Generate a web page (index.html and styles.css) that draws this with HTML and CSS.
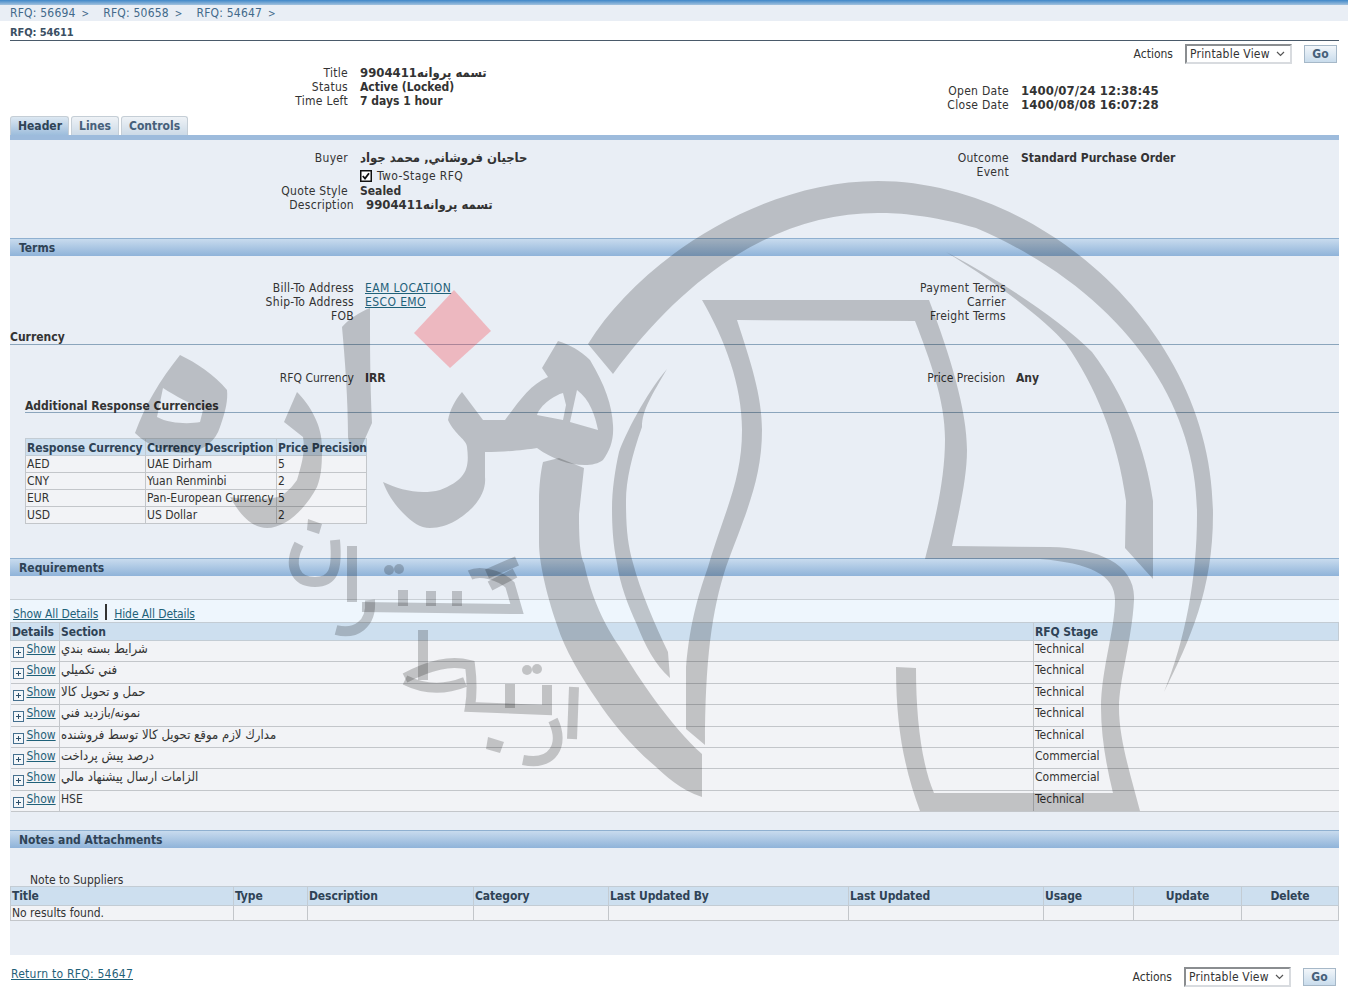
FILE: index.html
```html
<!DOCTYPE html>
<html lang="en">
<head>
    <meta charset="UTF-8">
    <title>RFQ: 54611</title>
    <link rel="stylesheet" href="styles.css">
</head>
<body>
    <div class="topbar"></div>
    <div class="crumbs">
        <a href="#">RFQ: 56694</a><span class="sep">&gt;</span>
        <a href="#">RFQ: 50658</a><span class="sep">&gt;</span>
        <a href="#">RFQ: 54647</a><span class="sep">&gt;</span>
    </div>

    <div class="page">
        <div class="page-title">RFQ: 54611</div>

        <div class="actions">
            <label>Actions</label>
            <select><option>Printable View</option></select>
            <button>Go</button>
        </div>

        <!-- Summary -->
        <div class="cols summary">
            <div class="kv">
                <span class="k">Title</span><span class="v v-big">تسمه پروانه9904411</span>
                <span class="k">Status</span><span class="v">Active (Locked)</span>
                <span class="k">Time Left</span><span class="v">7 days 1 hour</span>
            </div>
            <div class="kv kv-right summary-dates">
                <span class="k">Open Date</span><span class="v v-big v-date">1400/07/24 12:38:45</span>
                <span class="k">Close Date</span><span class="v v-big v-date">1400/08/08 16:07:28</span>
            </div>
        </div>

        <div class="tabs">
            <div class="tab active">Header</div>
            <div class="tab">Lines</div>
            <div class="tab">Controls</div>
        </div>

        <div class="panel">
            <!-- Header -->
            <div class="cols header-info">
                <div class="kv">
                    <span class="k">Buyer</span><span class="v v-big">حاجيان فروشاني, محمد جواد</span>
                    <span class="k"></span>
                    <span class="check-row">
                        <svg class="check" width="12" height="12" viewBox="0 0 12 12"><rect x="0.75" y="0.75" width="10.5" height="10.5" fill="#fff" stroke="#111" stroke-width="1.5"/><path d="M2.8 6l2.2 2.6 4-5.4" fill="none" stroke="#111" stroke-width="1.8"/></svg>
                        <span>Two-Stage RFQ</span>
                    </span>
                    <span class="k">Quote Style</span><span class="v">Sealed</span>
                    <span class="k k-desc">Description</span><span class="v v-big v-desc">تسمه پروانه9904411</span>
                </div>
                <div class="kv kv-right">
                    <span class="k">Outcome</span><span class="v">Standard Purchase Order</span>
                    <span class="k">Event</span><span class="v"></span>
                </div>
            </div>

            <!-- Terms -->
            <h2 class="bar bar-terms">Terms</h2>
            <div class="cols terms-info">
                <div class="kv kv-terms">
                    <span class="k">Bill-To Address</span><a class="v-link" href="#">EAM LOCATION</a>
                    <span class="k">Ship-To Address</span><a class="v-link" href="#">ESCO EMO</a>
                    <span class="k">FOB</span><span></span>
                </div>
                <div class="kv kv-terms-right">
                    <span class="k">Payment Terms</span><span></span>
                    <span class="k">Carrier</span><span></span>
                    <span class="k">Freight Terms</span><span></span>
                </div>
            </div>

            <h3 class="subhead subhead-currency">Currency</h3>
            <div class="cols currency-info">
                <div class="kv kv-terms">
                    <span class="k">RFQ Currency</span><span class="v">IRR</span>
                </div>
                <div class="kv kv-terms-right kv-precision">
                    <span class="k">Price Precision</span><span class="v">Any</span>
                </div>
            </div>

            <h3 class="subhead subhead-extra">Additional Response Currencies</h3>
            <table class="grid grid-currency">
                <tr><th>Response Currency</th><th>Currency Description</th><th>Price Precision</th></tr>
                <tr><td>AED</td><td>UAE Dirham</td><td>5</td></tr>
                <tr><td>CNY</td><td>Yuan Renminbi</td><td>2</td></tr>
                <tr><td>EUR</td><td>Pan-European Currency</td><td>5</td></tr>
                <tr><td>USD</td><td>US Dollar</td><td>2</td></tr>
            </table>

            <!-- Requirements -->
            <h2 class="bar bar-req">Requirements</h2>
            <div class="detail-links">
                <a href="#">Show All Details</a><span class="pipe"></span><a href="#">Hide All Details</a>
            </div>
            <table class="grid grid-req">
                <tr><th class="c-details">Details</th><th class="c-section">Section</th><th>RFQ Stage</th></tr>
                <tr><td class="c-details"><svg class="plus" viewBox="0 0 11 11"><rect x="0.5" y="0.5" width="10" height="10" fill="#f3f6f9" stroke="#45708f"/><path d="M3 5.5h5M5.5 3v5" stroke="#2c4f6b"/></svg><a href="#">Show</a></td><td class="fa">شرايط بسته بندي</td><td>Technical</td></tr>
                <tr><td class="c-details"><svg class="plus" viewBox="0 0 11 11"><rect x="0.5" y="0.5" width="10" height="10" fill="#f3f6f9" stroke="#45708f"/><path d="M3 5.5h5M5.5 3v5" stroke="#2c4f6b"/></svg><a href="#">Show</a></td><td class="fa">فني تكميلي</td><td>Technical</td></tr>
                <tr><td class="c-details"><svg class="plus" viewBox="0 0 11 11"><rect x="0.5" y="0.5" width="10" height="10" fill="#f3f6f9" stroke="#45708f"/><path d="M3 5.5h5M5.5 3v5" stroke="#2c4f6b"/></svg><a href="#">Show</a></td><td class="fa">حمل و تحويل كالا</td><td>Technical</td></tr>
                <tr><td class="c-details"><svg class="plus" viewBox="0 0 11 11"><rect x="0.5" y="0.5" width="10" height="10" fill="#f3f6f9" stroke="#45708f"/><path d="M3 5.5h5M5.5 3v5" stroke="#2c4f6b"/></svg><a href="#">Show</a></td><td class="fa">نمونه/بازديد فني</td><td>Technical</td></tr>
                <tr><td class="c-details"><svg class="plus" viewBox="0 0 11 11"><rect x="0.5" y="0.5" width="10" height="10" fill="#f3f6f9" stroke="#45708f"/><path d="M3 5.5h5M5.5 3v5" stroke="#2c4f6b"/></svg><a href="#">Show</a></td><td class="fa">مدارك لازم موقع تحويل كالا توسط فروشنده</td><td>Technical</td></tr>
                <tr><td class="c-details"><svg class="plus" viewBox="0 0 11 11"><rect x="0.5" y="0.5" width="10" height="10" fill="#f3f6f9" stroke="#45708f"/><path d="M3 5.5h5M5.5 3v5" stroke="#2c4f6b"/></svg><a href="#">Show</a></td><td class="fa">درصد پيش پرداخت</td><td>Commercial</td></tr>
                <tr><td class="c-details"><svg class="plus" viewBox="0 0 11 11"><rect x="0.5" y="0.5" width="10" height="10" fill="#f3f6f9" stroke="#45708f"/><path d="M3 5.5h5M5.5 3v5" stroke="#2c4f6b"/></svg><a href="#">Show</a></td><td class="fa">الزامات ارسال پيشنهاد مالي</td><td>Commercial</td></tr>
                <tr><td class="c-details"><svg class="plus" viewBox="0 0 11 11"><rect x="0.5" y="0.5" width="10" height="10" fill="#f3f6f9" stroke="#45708f"/><path d="M3 5.5h5M5.5 3v5" stroke="#2c4f6b"/></svg><a href="#">Show</a></td><td>HSE</td><td>Technical</td></tr>
            </table>

            <!-- Notes -->
            <h2 class="bar bar-notes">Notes and Attachments</h2>
            <div class="note-label">Note to Suppliers</div>
            <table class="grid grid-notes">
                <tr>
                    <th class="n1">Title</th><th class="n2">Type</th><th class="n3">Description</th><th class="n4">Category</th>
                    <th class="n5">Last Updated By</th><th class="n6">Last Updated</th><th class="n7">Usage</th>
                    <th class="n8 center">Update</th><th class="center">Delete</th>
                </tr>
                <tr><td>No results found.</td><td></td><td></td><td></td><td></td><td></td><td></td><td></td><td></td></tr>
            </table>
        </div>

        <div class="footer">
            <a class="return" href="#">Return to RFQ: 54647</a>
            <div class="actions actions-bottom">
                <label>Actions</label>
                <select><option>Printable View</option></select>
                <button>Go</button>
            </div>
        </div>
    </div>

    <!-- Watermark logo over the page -->
    <svg class="watermark" width="1348" height="995" viewBox="0 0 1348 995">
        <g class="wm-fill">
            <path d="M588 344C640 260 760 181 878 181C1040 181 1213 330 1213 514C1213 590 1190 640 1164 692C1185 640 1197 580 1197 514C1197 400 1120 290 976 228C930 215 900 213 878 213C780 213 690 270 613 374Z"/>
            <path d="M946 252C1000 280 1060 320 1092 352C1125 395 1146 450 1153 501L1153 579L1125 548L1126 501C1118 440 1095 385 1066 344C1045 320 1000 285 946 252Z"/>
            <path d="M702 300L929 300C950 355 967 410 967 450C967 480 958 515 952 546L1050 547C1100 548 1136 565 1134 600C1132 640 1119 680 1119 708C1119 740 1132 780 1140 811L920 811C905 770 896 730 896 667L916 668C916 720 922 765 934 793L1113 793C1106 765 1101 735 1101 708C1101 670 1115 630 1115 600C1115 575 1090 563 1040 559L925 559C935 520 945 480 945 439C945 400 930 360 915 321L737 320C750 360 762 395 762 430C762 480 745 515 726 567C712 610 705 660 705 745L686 729L686 667C690 620 700 590 708 567C725 510 742 480 742 430C742 385 725 340 702 300Z"/>
            <path d="M539 501C539 485 541 470 543 462L559 458L584 468L579 514C579 540 580 555 584 563C592 600 605 625 619 646C640 680 670 725 702 754L702 797C680 790 665 775 655 766C630 745 610 720 597 700C580 675 565 650 557 625C545 590 539 560 539 543Z"/>
            <path d="M667 369C652 395 642 410 642 427C632 455 626 480 626 501C626 530 628 545 633 563C640 590 655 625 668 652L670 678C655 665 645 645 637 625C628 605 620 585 617 563C613 545 612 525 612 509C612 490 615 470 619 452C625 435 645 395 667 369Z"/>
            <path fill-rule="evenodd" d="M558 341L542 368L548 377C530 385 520 400 505 420L483 420L462 392C455 400 450 410 448 420C455 435 467 440 467 447C470 470 465 480 440 490C420 495 400 490 383 482C388 495 395 505 403 513C412 522 420 528 430 528C450 528 465 515 473 507C482 497 486 487 485 477L485 452C505 452 525 450 537 448C560 465 590 470 603 460C610 450 614 440 613 425C612 405 605 385 590 360C580 350 570 345 558 341ZM563 393C555 395 540 405 537 415L563 420L566 405ZM577 390L570 422L598 430C595 415 590 400 577 390Z"/>
            <path d="M370 308C360 312 350 318 342 327C345 360 348 400 348 437C350 450 355 452 360 450L372 423C370 380 370 345 370 308Z"/>
            <path d="M297 392L284 422L303 437C305 450 303 460 297 480C290 490 282 497 273 498C258 500 245 500 230 497C240 515 252 528 267 528C285 528 305 510 317 487C322 475 322 460 322 447C322 425 310 405 297 392Z"/>
            <path fill-rule="evenodd" d="M180 355C160 380 145 405 135 433C150 448 170 453 187 453C205 450 216 440 220 427C226 410 228 400 227 390C215 375 195 362 180 355ZM163 388L157 417C170 424 190 424 200 422L203 410C190 403 175 396 163 388Z"/>
            <path d="M308 519L322 524L319 534L307 530Z"/>
            <path d="M488 737L504 742L500 753L486 749Z"/>
            <circle cx="389" cy="570" r="5"/><circle cx="399" cy="569" r="5"/>
            <circle cx="527" cy="670" r="5"/><circle cx="537" cy="669" r="5"/>
        </g>
        <path class="wm-pink" d="M454 290L491 331L450 368L414 333Z"/>
        <g class="wm-line">
            <path d="M299 544C288 565 295 582 315 582C332 582 338 572 335 540"/>
            <path d="M352 546L352 602"/>
            <path d="M370 600C372 625 355 635 336 630"/>
            <path d="M362 607L517 609L510 585C500 575 480 570 470 575"/>
            <path d="M403 590L403 606M431 591L431 606M457 591L457 606"/>
            <path d="M487 574L517 561M490 586L515 573"/>
            <path d="M423 630L423 680"/>
            <path d="M405 678C430 665 450 660 470 665C472 680 472 695 470 707L547 710L547 685"/>
            <path d="M405 680C425 690 445 690 465 682"/>
            <path d="M510 684L510 708"/>
            <path d="M574 687L572 739"/>
            <path d="M553 720C565 745 553 766 523 760"/>
        </g>
    </svg>
</body>
</html>
```

FILE: styles.css
```css
/* Base */
body {
    margin: 0;
    font-family: "DejaVu Sans", "Noto Sans", sans-serif;
    font-stretch: condensed;
    font-size: 12px;
    line-height: 14px;
    color: #333;
    background: #fff;
    position: relative;
    overflow: hidden;
}

a {
    color: #1f6179;
}

h2, h3 {
    margin: 0;
    font-size: 12px;
}

/* Top of page */
.topbar {
    height: 5px;
    background: linear-gradient(#3f87c8, #a3c2de);
}

.crumbs {
    height: 16px;
    padding-left: 10px;
    background: #e9eef5;
    line-height: 16px;
    letter-spacing: 0.2px;
}

.crumbs a {
    color: #42698a;
    text-decoration: none;
}

.crumbs .sep {
    display: inline-block;
    width: 24px;
    padding-left: 6px;
    box-sizing: border-box;
    color: #42698a;
    font-size: 10px;
}

.page {
    padding: 0 9px 0 10px;
}

.page-title {
    height: 19px;
    font-size: 11px;
    letter-spacing: -0.1px;
    line-height: 23px;
    font-weight: bold;
    color: #3b4f63;
    border-bottom: 1px solid #4a5a6a;
}

.actions {
    display: flex;
    justify-content: flex-end;
    align-items: center;
    height: 20px;
    margin-top: 3px;
    padding-right: 2px;
}

.actions label {
    margin-right: 12px;
}

.actions select {
    appearance: none;
    width: 107px;
    height: 20px;
    margin-right: 12px;
    padding: 0 0 0 3px;
    font: inherit;
    font-stretch: condensed;
    letter-spacing: 0.2px;
    color: #333;
    background: #fff url("data:image/svg+xml,%3Csvg xmlns='http://www.w3.org/2000/svg' width='9' height='6'%3E%3Cpath d='M1 1l3.5 3.5L8 1' fill='none' stroke='%23555' stroke-width='1.2'/%3E%3C/svg%3E") no-repeat right 5px center;
    border: 2px solid;
    border-color: #8a8d90 #d8dbdf #d8dbdf #8a8d90;
    border-radius: 0;
}

.actions button {
    width: 33px;
    height: 18px;
    padding: 0;
    font: inherit;
    font-stretch: condensed;
    font-weight: bold;
    color: #46607a;
    background: linear-gradient(#f2f6fa, #c9dcec);
    border: 1px solid #a6b8c8;
}

.actions-bottom {
    margin-top: 0;
    padding-right: 3px;
}

/* Label / value blocks */
.cols {
    display: grid;
    grid-template-columns: 610px 1fr;
}

.kv {
    display: grid;
    grid-template-columns: 338px 1fr;
    column-gap: 12px;
    align-content: start;
}

.kv-right {
    grid-template-columns: 389px 1fr;
}

.k {
    text-align: right;
    letter-spacing: 0.3px;
}

.currency-info .k {
    letter-spacing: 0;
}

.v {
    font-weight: bold;
}

.v-big {
    font-size: 13px;
}

.v-date {
    letter-spacing: 0.1px;
}

.summary {
    height: 41px;
    margin-top: 2px;
}

.summary-dates {
    padding-top: 18px;
}

/* Tabs */
.tabs {
    display: flex;
    gap: 2px;
    margin-top: 9px;
    height: 19px;
}

.tab {
    padding: 0 7px;
    line-height: 19px;
    font-weight: bold;
    color: #46607a;
    background: linear-gradient(#eef2f6, #ccdae7);
    border: 1px solid #c5ced6;
    border-bottom: 0;
    border-radius: 3px 3px 0 0;
    box-sizing: border-box;
}

.tab.active {
    width: 59px;
    color: #2f4356;
    background: linear-gradient(#dde8f2, #9dbddc);
}

.panel {
    height: 820px;
    padding-top: 11px;
    box-sizing: border-box;
    background: #e9eef5;
    border-top: 5px solid #9dbbdc;
    display: flow-root;
}

.header-info {
    height: 70px;
}

.check-row {
    display: flex;
    align-items: center;
    gap: 5px;
    height: 17px;
    margin-top: 2px;
    letter-spacing: 0.4px;
}

.k-desc {
    margin-right: -6px;
}

.v-desc {
    padding-left: 6px;
}

/* Blue section bars */
.bar {
    height: 17px;
    padding-left: 9px;
    line-height: 18px;
    color: #2f4356;
    background: linear-gradient(#c8dbee, #8fb3d9);
    border-top: 1px solid #8fb0d0;
}

.bar-terms {
    margin-top: 17px;
}

.kv-terms {
    grid-template-columns: 344px 1fr;
    column-gap: 11px;
}

.kv-terms-right {
    grid-template-columns: 386px 1fr;
    column-gap: 11px;
}

.kv-precision {
    grid-template-columns: 385px 1fr;
}

.terms-info {
    margin-top: 25px;
}

.v-link {
    justify-self: start;
    letter-spacing: 0.4px;
}

.subhead {
    height: 14px;
    line-height: 14px;
    color: #333;
    border-bottom: 1px solid #8ba5bc;
}

.subhead-currency {
    margin-top: 7px;
}

.currency-info {
    margin-top: 26px;
}

.subhead-extra {
    margin: 13px 0 0 15px;
    line-height: 16px;
}

/* Tables */
.grid {
    border-collapse: collapse;
    table-layout: fixed;
}

.grid th {
    height: 17px;
    padding: 0 1px;
    text-align: left;
    font-weight: bold;
    letter-spacing: -0.1px;
    color: #2f4356;
    background: #cddfef;
    border: 1px solid #c3ccd4;
    white-space: nowrap;
}

.grid td {
    padding: 0 1px;
    vertical-align: top;
    background: #f2f3f6;
    border: 1px solid #c3c6ca;
    white-space: nowrap;
}

.grid .center {
    text-align: center;
}

.grid-currency {
    width: 342px;
    margin: 25px 0 0 15px;
}

.grid-currency th {
    height: 15px;
    padding-top: 1px;
}

.grid-currency th:nth-child(1) { width: 117px; }
.grid-currency th:nth-child(2) { width: 128px; }

.grid-currency td {
    height: 15px;
    padding-top: 1px;
}

.bar-req {
    margin-top: 34px;
}

.detail-links {
    height: 22px;
    margin-top: 23px;
    padding-left: 3px;
    line-height: 28px;
    letter-spacing: -0.1px;
    background: #eef6fd;
    border-top: 1px solid #c9cfd5;
}

.pipe {
    display: inline-block;
    width: 2px;
    height: 16px;
    margin: 0 7px;
    vertical-align: -2px;
    background: #333;
}

.grid-req {
    width: 1329px;
}

.grid-req th.c-details {
    width: 46px;
}

.grid-req th.c-section {
    width: 971px;
}

.grid-req td {
    height: 21.4px;
    padding-top: 1px;
    box-sizing: border-box;
    border-left: 0;
    border-right: 0;
}

.grid-req td:nth-child(3),
.grid-req td:nth-child(2) {
    border-left: 1px solid #c3c6ca;
}

.grid-req td.fa {
    font-size: 13px;
}

.grid-req td.c-details {
    padding-left: 2px;
}

.plus {
    width: 11px;
    height: 11px;
    margin-right: 3px;
    vertical-align: -5px;
}

.bar-notes {
    margin-top: 18px;
}

.note-label {
    height: 13px;
    margin: 25px 0 0 20px;
}

.grid-notes {
    width: 1329px;
}

.grid-notes th {
    height: 18px;
}

.n1 { width: 220px; }
.n2 { width: 71px; }
.n3 { width: 163px; }
.n4 { width: 132px; }
.n5 { width: 237px; }
.n6 { width: 192px; }
.n7 { width: 87px; }
.n8 { width: 105px; }

/* Footer */
.footer {
    display: flex;
    justify-content: space-between;
    align-items: flex-start;
    margin-top: 12px;
}

.return {
    margin-left: 1px;
    letter-spacing: 0.25px;
}

/* Watermark */
.watermark {
    position: absolute;
    top: 0;
    left: 0;
    pointer-events: none;
}

.wm-fill {
    fill: rgba(0, 0, 0, 0.2);
}

.wm-pink {
    fill: rgba(250, 60, 70, 0.3);
}

.wm-line {
    fill: none;
    stroke: rgba(0, 0, 0, 0.2);
    stroke-width: 10;
}
```
